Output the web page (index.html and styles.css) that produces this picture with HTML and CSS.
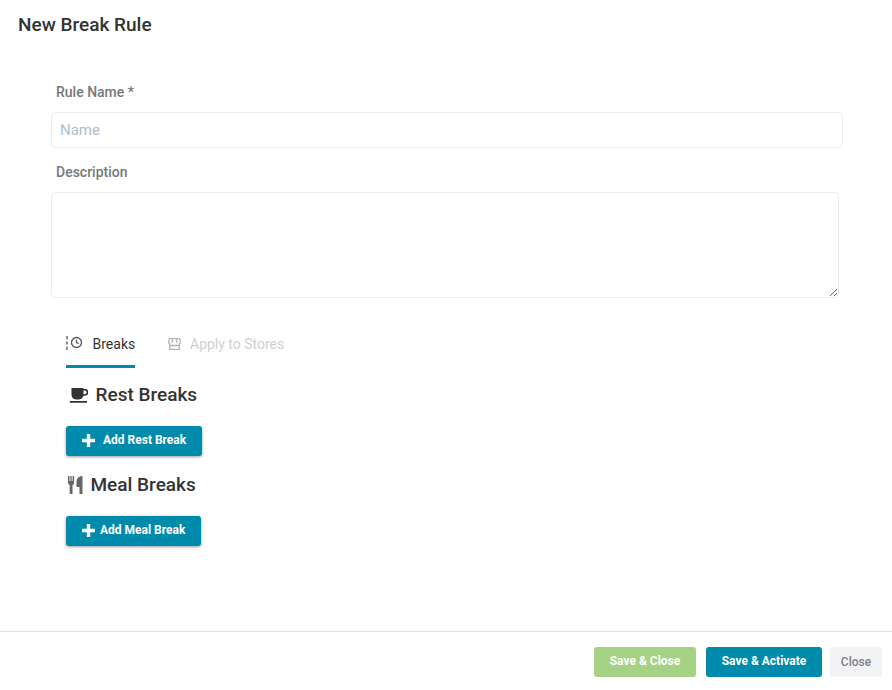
FILE: index.html
```html
<!DOCTYPE html>
<html lang="en">
<head>
<meta charset="utf-8">
<title>New Break Rule</title>
<link rel="stylesheet" href="styles.css">
</head>
<body>
<div class="dialog">
  <header class="head"><h1 class="title">New Break Rule</h1></header>
  <main class="content">
    <div class="field name-field">
      <label class="label" for="rule">Rule Name *</label>
      <input class="input" id="rule" type="text" placeholder="Name">
    </div>
    <div class="field desc-field">
      <label class="label" for="desc">Description</label>
      <textarea class="textarea" id="desc"></textarea>
    </div>
    <section class="tabs-wrap">
      <nav class="tabs">
        <div class="tab active">
          <svg class="tab-icon" width="17" height="14" viewBox="0 0 17 14"><g fill="none" stroke="#555" stroke-width="1.3"><circle cx="10.500" cy="6.500" r="5"/><path d="M10.500 3.700v2.800l2 1.300"/></g><path d="M1 0v3.600M1 5.400v3.200M1 10.400V14" stroke="#555" stroke-width="1.300" fill="none"/></svg>
          <span>Breaks</span>
        </div>
        <div class="tab muted">
          <svg class="tab-icon" width="13" height="12" viewBox="0 0 13 12"><path d="M1.500 .7h10l1 3a1.700 1.700 0 0 1-1.200 1.900v5.700H1.700V5.600A1.700 1.700 0 0 1 .5 3.700z" fill="none" stroke="#b5b5b5" stroke-width="1.300"/><path d="M1.500 7.500h10M4.500 1 4.100 5M8.500 1l.4 4" fill="none" stroke="#b5b5b5" stroke-width="1.300"/></svg>
          <span>Apply to Stores</span>
        </div>
      </nav>
      <div class="section-head rest-head">
        <svg width="19" height="15" viewBox="0 0 19 15"><path d="M2.500 0h12v1h1.500a2.900 2.900 0 0 1 0 6.800h-1.600A5 5 0 0 1 10 11.500H7A5 5 0 0 1 2.500 7zM14.500 2.600v3.600h1.300a1.800 1.800 0 0 0 0-3.600zM.8 13H18v1.700H.8z" fill="#333" fill-rule="evenodd"/></svg>
        <h2 class="section-title">Rest Breaks</h2>
      </div>
      <button class="add-btn rest-btn" type="button">
        <svg width="13" height="13" viewBox="0 0 13 13"><path d="M4.800 0h3.400v4.800H13v3.400H8.200V13H4.800V8.200H0V4.800h4.800z" fill="#fff"/></svg>
        <span>Add Rest Break</span>
      </button>
      <div class="section-head meal-head">
        <svg width="15" height="18" viewBox="0 0 15 18"><path d="M0 0h1.500v5h.9V0h1.300v5h.9V0h1.500v7a2 2 0 0 1-1.600 1.900V18H1.700V8.900A2 2 0 0 1 0 7zM8.500 6.500C8.500 2.500 10.500 0 14.500 0v18h-3v-7h-3z" fill="#666"/></svg>
        <h2 class="section-title">Meal Breaks</h2>
      </div>
      <button class="add-btn meal-btn" type="button">
        <svg width="13" height="13" viewBox="0 0 13 13"><path d="M4.800 0h3.400v4.800H13v3.400H8.200V13H4.800V8.200H0V4.800h4.800z" fill="#fff"/></svg>
        <span>Add Meal Break</span>
      </button>
    </section>
  </main>
  <footer class="foot">
    <button class="foot-btn save" type="button">Save &amp; Close</button>
    <button class="foot-btn activate" type="button">Save &amp; Activate</button>
    <button class="foot-btn close" type="button">Close</button>
  </footer>
</div>
</body>
</html>
```
FILE: styles.css
```css
* { box-sizing: border-box; }
html, body { margin: 0; height: 100%; background: #fff; }
body { font-family: Roboto, "Liberation Sans", sans-serif; color: #333; overflow: hidden; }
.dialog { width: 892px; height: 690px; display: flex; flex-direction: column; }
.head { height: 48px; padding: 13px 18px 0; flex: none; }
.title { margin: 0; font-size: 19px; line-height: 24px; font-weight: 500; color: #333; }
.content { flex: 1; padding: 34px 0 0 51px; }
.field { display: flex; flex-direction: column; }
.label { font-size: 14px; line-height: 20px; font-weight: 500; color: #777; padding-left: 5px; }
.input, .textarea { border: 1px solid #e9ebee; border-radius: 5px; background: #fff; font-family: inherit; font-size: 14px; outline: none; display: block; }
.name-field { width: 792px; }
.input { height: 36px; margin-top: 10px; padding: 0 8px; font-size: 15px; color: #333; }
.input::placeholder { color: #afbdcb; opacity: 1; }
.desc-field { width: 788px; margin-top: 14px; }
.textarea { height: 106px; margin-top: 10px; width: 788px; resize: vertical; }
.tabs-wrap { padding: 27px 0 0 15px; }
.tabs { display: flex; gap: 32px; height: 43px; }
.tab { display: flex; align-items: flex-start; padding-top: 10px; font-size: 14px; line-height: 18px; }
.tab.active { width: 69px; border-bottom: 3px solid #008aab; color: #333; gap: 9.5px; }
.tab.active .tab-icon { margin-top: 1px; flex: none; }
.tab.muted { color: #cfcfcf; gap: 9px; margin-left: 1px; }
.tab.muted .tab-icon { margin-top: 3px; }
.section-head { display: flex; align-items: center; }
.section-title { margin: 0; font-size: 19px; line-height: 28px; font-weight: 500; color: #333; }
.rest-head { margin-top: 13px; padding-left: 3px; gap: 7.5px; }
.meal-head { margin-top: 15px; padding-left: 2px; gap: 7.5px; }
.add-btn { display: flex; align-items: center; height: 30px; border: 0; border-radius: 3px; background: #008aab; color: #fff; font-family: inherit; font-size: 12px; font-weight: 700; box-shadow: 0 1px 3px rgba(0,0,0,.4); padding: 0 0 2px 16px; }
.rest-btn { width: 136px; margin-top: 17px; gap: 8px; }
.meal-btn { width: 135px; margin-top: 17px; gap: 5px; }
.foot { height: 59px; flex: none; border-top: 1px solid #e0e0e0; display: flex; justify-content: flex-end; align-items: flex-start; padding: 15px 10px 0 0; }
.foot-btn { height: 30px; border: 0; border-radius: 3px; font-family: inherit; font-size: 12px; font-weight: 700; color: #fff; padding: 0; }
.save, .activate { padding-bottom: 2px; }
.save { width: 102px; background: #a5d284; }
.activate { width: 116px; margin-left: 10px; background: #008aab; }
.close { width: 52px; margin-left: 8px; background: #f2f3f5; color: #808088; font-weight: 500; }
```
